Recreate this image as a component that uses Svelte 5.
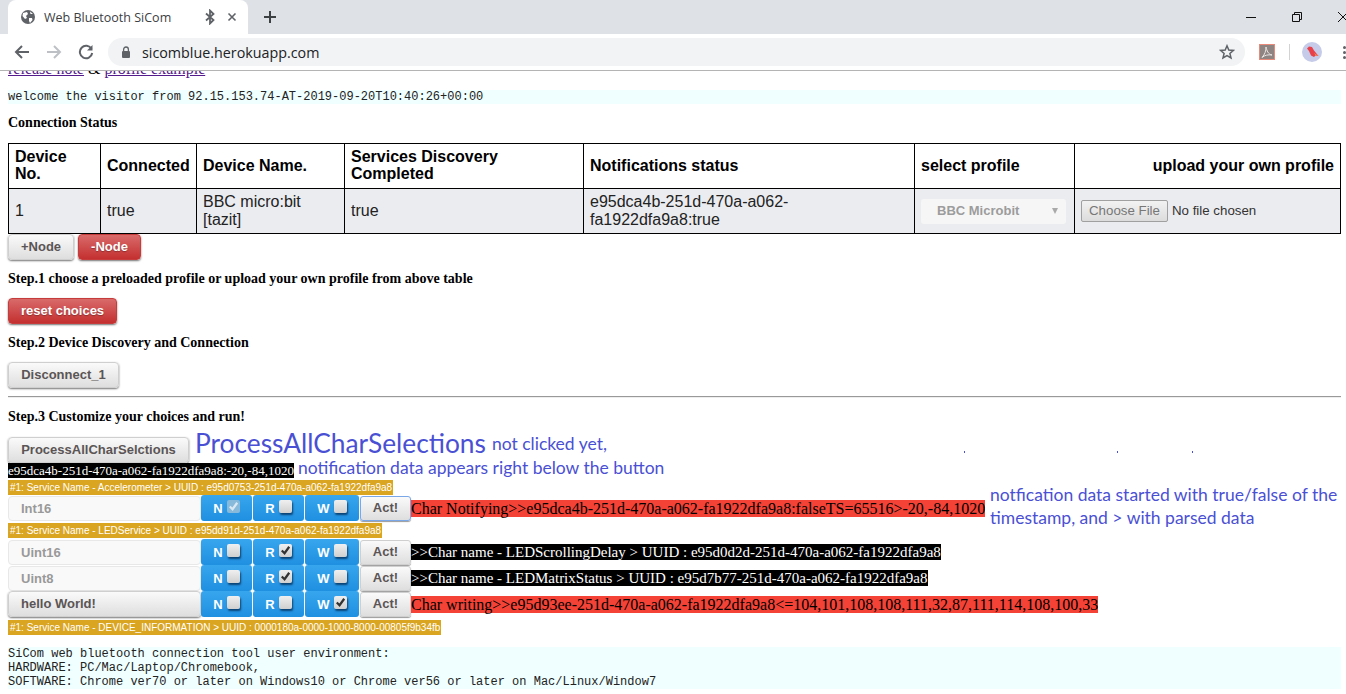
<script>
  const headers = [
    "Device No.",
    "Connected",
    "Device Name.",
    "Services Discovery Completed",
    "Notifications status",
    "select profile",
    "upload your own profile",
  ];

  const services = {
    accel: "#1: Service Name - Accelerometer > UUID : e95d0753-251d-470a-a062-fa1922dfa9a8",
    led: "#1: Service Name - LEDService > UUID : e95dd91d-251d-470a-a062-fa1922dfa9a8",
    info: "#1: Service Name - DEVICE_INFORMATION > UUID : 0000180a-0000-1000-8000-00805f9b34fb",
  };

  const ledRows = [
    {
      type: "Uint16",
      flags: { N: false, R: true, W: false },
      log: ">>Char name - LEDScrollingDelay > UUID : e95d0d2d-251d-470a-a062-fa1922dfa9a8",
      tone: "dark",
    },
    {
      type: "Uint8",
      flags: { N: false, R: true, W: false },
      log: ">>Char name - LEDMatrixStatus > UUID : e95d7b77-251d-470a-a062-fa1922dfa9a8",
      tone: "dark",
    },
    {
      type: "hello World!",
      flags: { N: false, R: false, W: true },
      log: "Char writing>>e95d93ee-251d-470a-a062-fa1922dfa9a8<=104,101,108,108,111,32,87,111,114,108,100,33",
      tone: "red",
      isButton: true,
    },
  ];
</script>

{#snippet flags(values, faded)}
  <div class="flags">
    {#each Object.keys(values) as key}
      <div class="flag">
        <span>{key}</span>
        <span class="box" class:faded={faded && values[key]}>
          {#if values[key]}
            <svg viewBox="0 0 14 14" width="14" height="14">
              <path d="M3 7.5 L6 10.5 L11 3.5" fill="none" stroke="currentColor" stroke-width="2.4" />
            </svg>
          {/if}
        </span>
      </div>
    {/each}
  </div>
{/snippet}

<div class="chrome">
  <div class="tabstrip">
    <div class="tab">
      <svg class="globe" viewBox="0 0 16 16" width="16" height="16">
        <circle cx="8" cy="8" r="7" fill="#5f6368" />
        <path d="M3 4 L7 3 L8 5 L6 7 L7 9 L5 10 L2.5 7 Z M9 9 L12 9 L12.5 11 L10 14 L9 12 Z M10 2.5 L13 5 L10.5 5 Z" fill="#fff" />
      </svg>
      <span class="tab-title">Web Bluetooth SiCom</span>
      <svg class="bt" viewBox="0 0 12 16" width="12" height="16">
        <path d="M2 4.5 L9.5 11 L6 14.5 L6 1.5 L9.5 5 L2 11.5" fill="none" stroke="#5f6368" stroke-width="1.8" />
      </svg>
      <svg class="tab-x" viewBox="0 0 10 10" width="10" height="10">
        <path d="M1.5 1.5 L8.5 8.5 M8.5 1.5 L1.5 8.5" stroke="#5f6368" stroke-width="1.6" />
      </svg>
    </div>
    <svg class="plus" viewBox="0 0 12 12" width="12" height="12">
      <path d="M6 0 V12 M0 6 H12" stroke="#3c4043" stroke-width="2" />
    </svg>
    <div class="win-controls">
      <svg viewBox="0 0 10 10" width="10" height="10"><path d="M0 5.5 H10" stroke="#111" stroke-width="1" /></svg>
      <svg viewBox="0 0 10 10" width="10" height="10">
        <path d="M.5 2.5 H7.5 V9.5 H.5 Z M2.5 2.5 V.5 H9.5 V7.5 H7.5" fill="none" stroke="#111" />
      </svg>
      <svg viewBox="0 0 10 10" width="10" height="10"><path d="M0 0 L10 10 M10 0 L0 10" stroke="#111" /></svg>
    </div>
  </div>
  <div class="toolbar">
    <svg viewBox="0 0 16 16" width="16" height="16">
      <path d="M15 8 H2 M8 2 L2 8 L8 14" fill="none" stroke="#5f6368" stroke-width="2" />
    </svg>
    <svg viewBox="0 0 16 16" width="16" height="16">
      <path d="M1 8 H14 M8 2 L14 8 L8 14" fill="none" stroke="#bdc1c6" stroke-width="2" />
    </svg>
    <svg viewBox="0 0 16 16" width="16" height="16">
      <path d="M13.5 5 A6.2 6.2 0 1 0 14.2 9" fill="none" stroke="#5f6368" stroke-width="2" />
      <path d="M14.5 1 V6.5 H9 Z" fill="#5f6368" />
    </svg>
    <div class="omnibox">
      <svg viewBox="0 0 10 12" width="10" height="12">
        <path d="M2.6 5 V3.4 A2.4 2.4 0 0 1 7.4 3.4 V5" fill="none" stroke="#5f6368" stroke-width="1.3" />
        <rect x="1" y="5" width="8" height="7" rx="1" fill="#5f6368" />
      </svg>
      <span class="url">sicomblue.herokuapp.com</span>
      <svg class="star" viewBox="0 0 16 16" width="16" height="16">
        <path d="M8 1.8 L9.8 6 L14.4 6.4 L10.9 9.4 L12 13.9 L8 11.5 L4 13.9 L5.1 9.4 L1.6 6.4 L6.2 6 Z" fill="none" stroke="#5f6368" stroke-width="1.5" />
      </svg>
    </div>
    <svg class="pdf" viewBox="0 0 16 16" width="16" height="16">
      <rect x=".5" y=".5" width="15" height="15" fill="#8e8583" stroke="#e8897a" />
      <path d="M7 3 C8 7 9 10 13 11 C9 10.5 6 11 3 13.5 C6 10 7 7 7 3 Z" fill="none" stroke="#e9e4e2" stroke-width="1" />
    </svg>
    <div class="divider"></div>
    <div class="avatar">
      <svg viewBox="0 0 20 20" width="20" height="20">
        <path d="M5 6.5 L7 4.5 L10 5 L12 8.5 L16.5 14 L13.5 13.5 L12 15 L9 13.5 L7 9 Z" fill="#e8404a" />
        <path d="M12 11 L16.5 14 L13.5 13.5 Z" fill="#f58a4a" />
      </svg>
    </div>
    <div class="dots"><i></i><i></i><i></i></div>
  </div>
</div>

<main class="page">
  <p class="links">
    <a href="#top">release note</a> &amp; <a href="#top">profile example</a>
  </p>
  <pre class="welcome">welcome the visitor from 92.15.153.74-AT-2019-09-20T10:40:26+00:00</pre>
  <p class="step first">Connection Status</p>

  <table>
    <colgroup>
      <col style="width: 92px" />
      <col style="width: 96px" />
      <col style="width: 148px" />
      <col style="width: 239px" />
      <col style="width: 331px" />
      <col style="width: 160px" />
      <col />
    </colgroup>
    <thead>
      <tr>
        {#each headers as h}
          <th>{h}</th>
        {/each}
      </tr>
    </thead>
    <tbody>
      <tr>
        <td>1</td>
        <td>true</td>
        <td>BBC micro:bit [tazit]</td>
        <td>true</td>
        <td>e95dca4b-251d-470a-a062-fa1922dfa9a8:true</td>
        <td>
          <div class="select">
            <span>BBC Microbit</span>
            <i class="caret"></i>
          </div>
        </td>
        <td>
          <div class="file">
            <span class="file-btn">Choose File</span>
            <span>No file chosen</span>
          </div>
        </td>
      </tr>
    </tbody>
  </table>

  <div class="btn-row">
    <button class="btn">+Node</button>
    <button class="btn red">-Node</button>
  </div>

  <p class="step s1">Step.1 choose a preloaded profile or upload your own profile from above table</p>
  <button class="btn red reset">reset choices</button>
  <p class="step s2">Step.2 Device Discovery and Connection</p>
  <button class="btn disconnect">Disconnect_1</button>
  <hr />
  <p class="step s3">Step.3 Customize your choices and run!</p>

  <div class="process-line">
    <button class="btn process">ProcessAllCharSelctions</button>
    <span class="note big">ProcessAllCharSelections</span>
    <span class="note">not clicked yet,</span>
    <i class="speck" style="left: 956px"></i>
    <i class="speck" style="left: 1109px"></i>
    <i class="speck" style="left: 1184px"></i>
  </div>
  <div class="notif-line">
    <span class="log dark">e95dca4b-251d-470a-a062-fa1922dfa9a8:-20,-84,1020</span>
    <span class="note">notification data appears right below the button</span>
  </div>

  <div class="service">{services.accel}</div>
  <div class="char-row">
    <div class="char-input">Int16</div>
    {@render flags({ N: true, R: false, W: false }, true)}
    <button class="act focus">Act!</button>
    <span class="log red">Char Notifying&gt;&gt;e95dca4b-251d-470a-a062-fa1922dfa9a8:falseTS=65516&gt;-20,-84,1020</span>
    <span class="note side">notfication data started with true/false of the<br />timestamp, and &gt; with parsed data</span>
  </div>

  <div class="service second">{services.led}</div>
  {#each ledRows as row}
    <div class="char-row">
      {#if row.isButton}
        <button class="btn char-btn">{row.type}</button>
      {:else}
        <div class="char-input">{row.type}</div>
      {/if}
      {@render flags(row.flags, false)}
      <button class="act">Act!</button>
      <span class="log {row.tone}">{row.log}</span>
    </div>
  {/each}

  <div class="service third">{services.info}</div>

  <pre class="env">SiCom web bluetooth connection tool user environment:
HARDWARE: PC/Mac/Laptop/Chromebook,
SOFTWARE: Chrome ver70 or later on Windows10 or Chrome ver56 or later on Mac/Linux/Window7</pre>
</main>

<style>
  :global(body) {
    margin: 0;
    background: #fff;
    overflow: hidden;
    height: 694px;
  }

  .chrome {
    position: relative;
    z-index: 1;
    height: 70px;
    background: #fff;
    border-bottom: 1px solid #b4b4b4;
    font-family: "Open Sans", "Noto Sans", sans-serif;
  }

  .tabstrip {
    display: flex;
    align-items: center;
    height: 34px;
    padding-left: 8px;
    background: #dee1e6;
  }

  .tab {
    display: flex;
    align-items: center;
    width: 240px;
    height: 34px;
    box-sizing: border-box;
    padding: 0 11px 0 12px;
    background: #fff;
    border-radius: 8px 8px 0 0;
  }

  .tab-title {
    margin-left: 8px;
    font-size: 12.5px;
    color: #3c4043;
    white-space: nowrap;
  }

  .bt {
    margin-left: auto;
  }

  .tab-x {
    margin-left: 11px;
  }

  .plus {
    margin-left: 16px;
  }

  .win-controls {
    display: flex;
    gap: 36px;
    align-items: center;
    margin-left: auto;
    margin-right: -2px;
  }

  .toolbar {
    display: flex;
    align-items: center;
    gap: 16px;
    height: 36px;
    padding: 0 0 0 14px;
  }

  .omnibox {
    display: flex;
    align-items: center;
    flex: none;
    width: 1137px;
    height: 28px;
    margin-left: -2px;
    margin-right: -2px;
    padding: 0 10px 0 13px;
    box-sizing: border-box;
    border-radius: 14px;
    background: #f1f3f4;
  }

  .url {
    margin-left: 11px;
    font-size: 14.3px;
    color: #202124;
  }

  .star {
    margin-left: auto;
  }

  .divider {
    flex: none;
    width: 1px;
    height: 16px;
    margin: 0 -4px 0 -2px;
    background: #d3d3d3;
  }

  .avatar {
    display: flex;
    flex: none;
    width: 20px;
    height: 20px;
    border-radius: 50%;
    background: #c5cbe9;
  }

  .dots {
    display: flex;
    flex-direction: column;
    flex: none;
    gap: 2px;
    margin-left: 5px;
  }

  .dots i {
    width: 3px;
    height: 3px;
    border-radius: 50%;
    background: #5f6368;
  }

  .page {
    padding: 0 5px 0 8px;
    margin-top: -11px;
    font-family: "Liberation Serif", "Times New Roman", serif;
    font-size: 16px;
    color: #000;
  }

  .links {
    margin: 0;
    line-height: 18px;
  }

  a {
    color: #551a8b;
  }

  pre {
    margin: 0;
    font-family: "Liberation Mono", "Courier New", monospace;
    font-size: 12px;
    line-height: 14px;
    background: #f0ffff;
    color: #222;
  }

  .welcome {
    margin-top: 12px;
  }

  .step {
    margin: 0;
    font-size: 14px;
    font-weight: bold;
    line-height: 16px;
  }

  .first {
    margin-top: 11px;
    margin-bottom: 12px;
  }

  table {
    width: 1333px;
    table-layout: fixed;
    border-collapse: collapse;
    font-family: "Liberation Sans", Arial, sans-serif;
    font-size: 16px;
    line-height: 18px;
  }

  th,
  td {
    padding: 4px 6px;
    border: 1px solid #000;
    text-align: left;
    overflow-wrap: anywhere;
  }

  th {
    padding: 4px 6px 6px;
    line-height: 17px;
  }

  th:last-child {
    text-align: right;
  }

  td {
    height: 36px;
    background: #ebecf0;
    color: #222;
  }

  .select {
    display: flex;
    align-items: center;
    justify-content: space-between;
    width: 145px;
    height: 25px;
    padding: 0 8px 0 16px;
    box-sizing: border-box;
    border-radius: 3px;
    background: #f6f6f6;
    color: #9c9c9c;
    font-size: 13px;
    font-weight: bold;
  }

  .caret {
    border-left: 3px solid transparent;
    border-right: 3px solid transparent;
    border-top: 6px solid #a9a9a9;
  }

  .file {
    display: flex;
    align-items: center;
    gap: 4px;
    font-size: 13.3px;
    color: #333;
  }

  .file-btn {
    padding: 1px 7px;
    border: 1px solid #a0a0a0;
    border-radius: 2px;
    background: linear-gradient(#f2f2f2, #dcdcdc);
    color: #777;
  }

  .btn {
    box-sizing: border-box;
    height: 26px;
    padding: 0 12px 2px;
    border: 1px solid #cfcfcf;
    border-radius: 4px;
    background: linear-gradient(#fafafa, #dedede);
    box-shadow: 0 1px 2px rgba(0, 0, 0, 0.55);
    color: #5b5555;
    font-family: "Liberation Sans", Arial, sans-serif;
    font-size: 13px;
    font-weight: bold;
    white-space: nowrap;
  }

  .btn.red {
    border-color: #c63c3c;
    background: linear-gradient(#d96a6a, #c43030);
    color: #fff;
    text-shadow: 0 1px 1px rgba(0, 0, 0, 0.3);
  }

  .btn-row {
    display: flex;
    gap: 4px;
  }

  .s1 {
    margin-top: 11px;
    margin-bottom: 11px;
  }

  .s2 {
    margin-top: 11px;
    margin-bottom: 11px;
  }

  .reset,
  .disconnect {
    display: block;
  }

  .reset {
    width: 109px;
  }

  .disconnect {
    width: 111px;
  }

  hr {
    margin: 8px 0 0;
    border: 0;
    border-top: 1px solid #999;
    border-bottom: 1px solid #eee;
    width: 1333px;
  }

  .s3 {
    margin-top: 11px;
    margin-bottom: 12px;
  }

  .process-line {
    position: relative;
    display: flex;
    align-items: flex-end;
    height: 26px;
  }

  .btn.process {
    width: 181px;
    flex: none;
    padding: 0 0 2px;
  }

  .note {
    font-family: Lato, "Open Sans", sans-serif;
    font-size: 17.5px;
    color: #4a50d4;
    white-space: nowrap;
    line-height: 22px;
  }

  .note.big {
    margin-left: 6px;
    margin-right: 6px;
    font-size: 26.3px;
    line-height: 30px;
    margin-bottom: 5px;
  }

  .process-line .note:not(.big) {
    margin-bottom: 8px;
  }

  .speck {
    position: absolute;
    top: 14px;
    width: 1px;
    height: 2px;
    background: #4a50d4;
  }

  .notif-line {
    display: flex;
    align-items: center;
    gap: 4px;
    height: 15px;
  }

  .notif-line .note {
    margin-top: -6px;
  }

  .log {
    font-size: 15px;
    line-height: 16px;
    white-space: nowrap;
  }

  .notif-line .log {
    font-size: 13px;
    line-height: 15px;
  }

  .log.dark {
    background: #000;
    color: #fff;
  }

  .log.red {
    background: #f44336;
    color: #000;
    font-size: 16px;
    line-height: 17px;
  }

  .service {
    width: fit-content;
    margin-top: 2px;
    background: #daa520;
    color: #fff;
    font-family: "Liberation Sans", Arial, sans-serif;
    font-size: 10px;
    line-height: 15px;
    padding: 0 1px 0 2px;
  }

  .second {
    margin-top: 2px;
    margin-bottom: 1px;
  }

  .third {
    margin-top: 3px;
    margin-bottom: 12px;
  }

  .char-row {
    position: relative;
    display: flex;
    align-items: center;
    height: 26px;
  }

  .char-input {
    box-sizing: border-box;
    flex: none;
    width: 193px;
    height: 25px;
    padding-left: 12px;
    border: 1px solid #e8e8e8;
    border-radius: 4px;
    background: #f9f9f9;
    color: #999;
    font-family: "Liberation Sans", Arial, sans-serif;
    font-size: 13px;
    font-weight: bold;
    line-height: 23px;
  }

  .btn.char-btn {
    flex: none;
    width: 193px;
    padding: 0 0 2px 12px;
    text-align: left;
  }

  .flags {
    display: flex;
    flex: none;
    height: 26px;
    gap: 1px;
  }

  .flag {
    display: flex;
    align-items: center;
    justify-content: center;
    gap: 4px;
    width: 51px;
    border-radius: 3px;
    background: linear-gradient(#38a6ee, #1f8fe0);
    color: #fff;
    font-family: "Liberation Sans", Arial, sans-serif;
    font-size: 13px;
    font-weight: bold;
  }

  .flag:last-child {
    width: 54px;
  }

  .box {
    display: flex;
    width: 13px;
    height: 13px;
    margin-top: -3px;
    border-radius: 2px;
    background: linear-gradient(#f0f0f0, #cfcfcf);
    box-shadow: 1px 2px 2px rgba(0, 40, 80, 0.75);
    color: #333;
  }

  .box.faded {
    background: #86b9da;
    box-shadow: none;
    color: #d9e8f2;
  }

  .box svg {
    margin: -1px 0 0 0;
  }

  .act {
    flex: none;
    box-sizing: border-box;
    width: 51px;
    height: 25px;
    margin-left: 1px;
    padding: 0 0 1px;
    border: 1px solid #cfcfcf;
    border-radius: 3px;
    background: linear-gradient(#fafafa, #dedede);
    box-shadow: 0 1px 1px rgba(0, 0, 0, 0.4);
    color: #5b5555;
    font-family: "Liberation Sans", Arial, sans-serif;
    font-size: 13px;
    font-weight: bold;
  }

  .act.focus {
    border-color: #7aa7e8;
  }

  .note.side {
    position: absolute;
    left: 982px;
    top: -12px;
    line-height: 23px;
  }

  .env {
    font-size: 12px;
  }
</style>
